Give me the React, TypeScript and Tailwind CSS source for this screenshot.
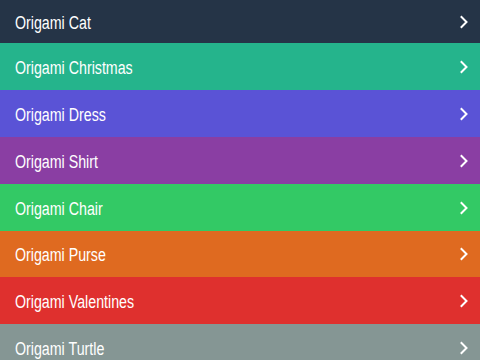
import * as React from "react"

type Item = { label: string; bg: string; h: string }

const items: Item[] = [
  { label: "Origami Cat", bg: "bg-[#253447]", h: "h-[43px]" },
  { label: "Origami Christmas", bg: "bg-[#25b48c]", h: "h-[47px]" },
  { label: "Origami Dress", bg: "bg-[#5a53d6]", h: "h-[47px]" },
  { label: "Origami Shirt", bg: "bg-[#8a3ea3]", h: "h-[47px]" },
  { label: "Origami Chair", bg: "bg-[#33c965]", h: "h-[47px]" },
  { label: "Origami Purse", bg: "bg-[#df6a20]", h: "h-[46px]" },
  { label: "Origami Valentines", bg: "bg-[#df302e]", h: "h-[47px]" },
  { label: "Origami Turtle", bg: "bg-[#859694]", h: "h-[47px]" },
]

function Chevron() {
  return (
    <svg width="10" height="14" viewBox="0 0 10 14" fill="none" className="shrink-0">
      <path d="M2.5 2 L7.5 7 L2.5 12" stroke="white" strokeWidth="2" strokeLinecap="square" />
    </svg>
  )
}

export default function App() {
  return (
    <div className="flex h-[360px] w-[480px] flex-col overflow-hidden bg-[#859694] font-['Liberation_Sans',sans-serif]">
      {items.map((it) => (
        <div key={it.label} className={`flex shrink-0 items-center justify-between pl-[15px] pr-[11px] ${it.bg} ${it.h}`}>
          {/* the reference face is a narrow one we don't have, so squeeze Liberation Sans */}
          <span className="inline-block origin-left scale-x-[0.79] pt-[2px] text-[18px] leading-none whitespace-nowrap text-white">
            {it.label}
          </span>
          <Chevron />
        </div>
      ))}
    </div>
  )
}
